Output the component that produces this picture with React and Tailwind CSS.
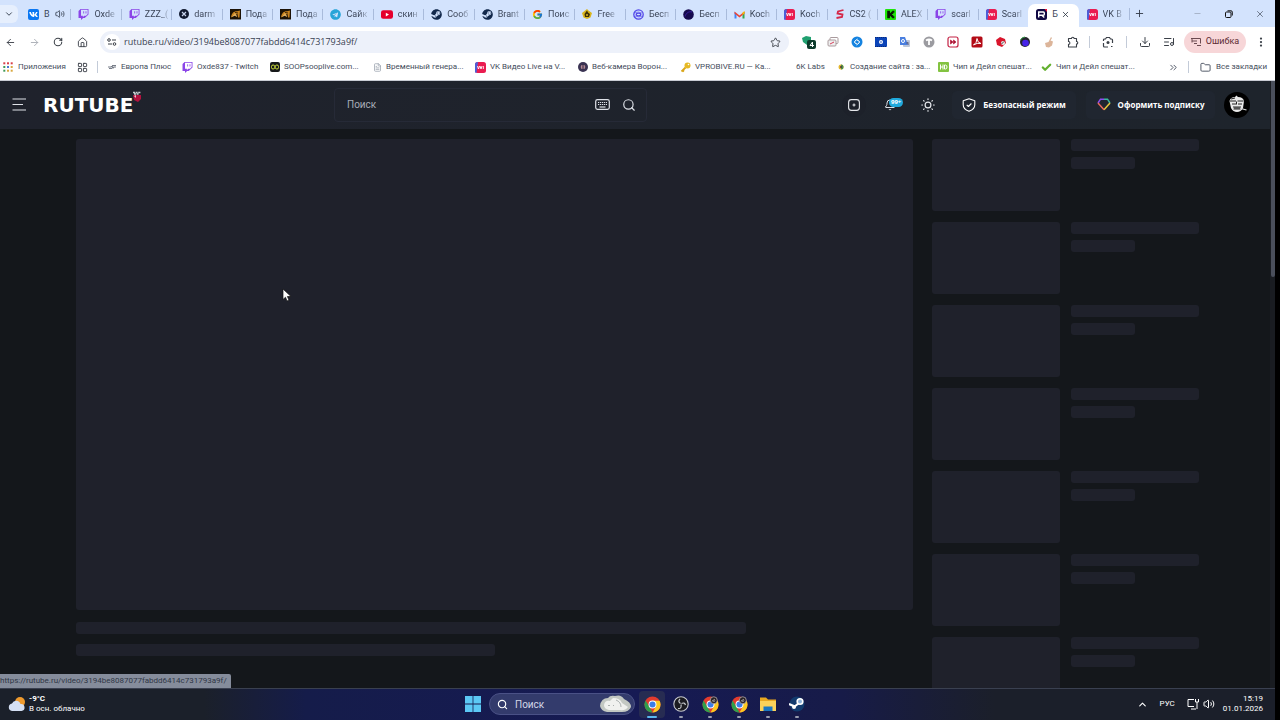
import React from 'react';
import {
  ArrowLeft, ArrowRight, RotateCw, House, Star, Download, ListMusic, EllipsisVertical, Plus, Minus, X,
  ChevronDown, ChevronUp, ChevronsRight, Folder, Volume2, Search,
  Bell, Check, LayoutGrid, FileText,
} from 'lucide-react';
import { FaTwitch, FaVk, FaTelegram, FaSteam } from 'react-icons/fa';
import { FcGoogle } from 'react-icons/fc';

const Box = ({ bg, children, r = 2 }) => (
  <svg viewBox="0 0 10 10" className="size-[10px] shrink-0" aria-hidden="true">
    <rect width="10" height="10" rx={r} fill={bg} />
    {children}
  </svg>
);

const Twitch = () => <FaTwitch className="size-[11px] shrink-0 text-[#8b45e8]" />;
const Vk = () => (
  <span className="flex size-[11px] shrink-0 items-center justify-center rounded-[2px] bg-[#0a77f2]">
    <FaVk className="size-[9px] text-white" />
  </span>
);
const DarkX = () => (
  <Box bg="#111a30" r={5}>
    <path d="M3 3l4 4M7 3L3 7" stroke="#c9d4ee" strokeWidth="1.2" />
  </Box>
);
const Hamster = () => (
  <svg viewBox="0 0 11 11" className="size-[11px] shrink-0" aria-hidden="true">
    <rect width="11" height="10.5" fill="#1c1206" />
    <path d="M1 8.5C1.500 4 4 2 7 2.200L10 1.500 9.500 8.500 8 8.500 7.500 5 5 6z" fill="#c9831f" />
    <path d="M2.500 8l2.500-3.500L6.500 8M4 6.500h2.500" stroke="#f0c070" strokeWidth=".8" fill="none" />
    <path d="M5 3.500l3 .5" stroke="#1c1206" strokeWidth=".8" />
  </svg>
);
const Telegram = () => <FaTelegram className="size-[11px] shrink-0 text-[#28a5d8]" />;
const Youtube = () => (
  <svg viewBox="0 0 12 9" className="h-[9px] w-[12px] shrink-0" aria-hidden="true">
    <rect width="12" height="8.500" y=".3" rx="2.200" fill="#e5002d" />
    <path d="M4.800 2.700v3.700L8 4.500z" fill="#fff" />
  </svg>
);
const Steam = () => <FaSteam className="size-[11px] shrink-0 text-[#12294c]" />;
const Google = () => <FcGoogle className="size-[11px] shrink-0" />;
const Free = () => (
  <svg viewBox="0 0 10 10" className="size-[10px] shrink-0" aria-hidden="true">
    <path d="M0 4l2.500-2L5 0l1.500 1.500L10 4 8.500 8.500l-3.500 1.500L1.500 8.500z" fill="#d9b51c" />
    <path d="M2.500 5L5 1.500l1 2L8 5 7 8H3z" fill="#3d2f05" />
    <circle cx="5" cy="6" r="1" fill="#d9b51c" />
  </svg>
);
const Swirl = () => (
  <svg viewBox="0 0 11 11" className="size-[11px] shrink-0" fill="none" stroke="#5348e8" strokeWidth="1.300" aria-hidden="true">
    <circle cx="5.500" cy="5.500" r="4.700" />
    <ellipse cx="5.500" cy="5.500" rx="2.300" ry="1.400" />
    <path d="M1 4q4.500-2 8 0M2 7q4 2 8 0" strokeWidth=".6" />
  </svg>
);
const Planet = () => (
  <svg viewBox="0 0 11 11" className="size-[11px] shrink-0" aria-hidden="true">
    <circle cx="5.500" cy="5.500" r="5.300" fill="#170b4e" />
    <path d="M2 7.500C3 4 6 2 9 3" stroke="#3a1fa0" fill="none" />
  </svg>
);
const Gmail = () => (
  <svg viewBox="0 0 11 9" className="h-[9px] w-[11px] shrink-0" aria-hidden="true">
    <path d="M.5 2v6.500h2V4z" fill="#4285f4" />
    <path d="M8.500 4v4.500h2V2z" fill="#34a853" />
    <path d="M.5 1.500L5.500 5.500l5-4v2L5.500 7.500.5 3.500z" fill="#ea4335" />
    <path d="M8.500 2.500L10.500 1v2.500l-2 1.500z" fill="#fbbc04" />
  </svg>
);
const Vvi = () => (
  <svg viewBox="0 0 11 11" className="size-[11px] shrink-0" aria-hidden="true">
    <rect width="11" height="11" rx="2.500" fill="#ea1c50" />
    <path d="M0 2.500A2.500 2.500 0 012.500 0H3L1.500 11A2 2 0 010 8.500z" fill="#4b5fd8" />
    <path d="M2.500 4l1 3 1-3M5 4l1 3 1-3M8.300 4v3" stroke="#fff" strokeWidth=".9" fill="none" />
  </svg>
);
const RedS = () => (
  <svg viewBox="0 0 10 10" className="size-[10px] shrink-0" fill="none" stroke="#d5284a" strokeWidth="1.800" aria-hidden="true">
    <path d="M8.500 1L3 2.500 2.500 4.500 7.500 5.500 7 8 1.500 9" />
  </svg>
);
const Kick = () => (
  <svg viewBox="0 0 10 10" className="size-[11px] shrink-0" aria-hidden="true">
    <rect width="10" height="10" rx="1" fill="#1fe50a" />
    <path d="M2 1.500h2.500v2h1v-1h1v-1h2v2h-1v1h-1v1h1v1h1v2h-2v-1h-1v-1h-1v2H2z" fill="#071a04" />
  </svg>
);
const Rutube = () => (
  <svg viewBox="0 0 11 11" className="size-[11px] shrink-0" aria-hidden="true">
    <rect width="11" height="11" rx="2.500" fill="#100943" />
    <path d="M11 0v3L8.500 0z" fill="#ed143b" />
    <path d="M2.700 8.500V3h4.600a1 1 0 011 1v1.200a1 1 0 01-1 1H3M6 6.500l2.300 2" stroke="#fff" strokeWidth="1.400" fill="none" />
  </svg>
);

const TABS = [
  ['В', Vk, 'sound'], ['Oxde', Twitch], ['ZZZ_(', Twitch], ['darm', DarkX], ['Пода', Hamster], ['Пода', Hamster],
  ['Сайк', Telegram], ['скин', Youtube], ['Сооб', Steam], ['Brant', Steam], ['Поис', Google], ['Free', Free],
  ['Бесп', Swirl], ['Бесп', Planet], ['Koch', Gmail], ['Koch', Vvi], ['CS2 (', RedS], ['ALEX', Kick],
  ['scarl', Twitch], ['Scarl', Vvi], ['Б', Rutube, 'active'], ['VK В', Vvi],
];

function Tab({ tab: [title, Icon, state], index }) {
  const active = state === 'active';
  return (
    <div className={`relative flex h-[23px] min-w-0 flex-1 items-center pb-[3px] ${active ? 'rounded-t-[7px] bg-white' : ''}`}>
      {index > 0 && index < 20 && <span className="absolute left-0 h-[11px] w-px bg-[#a9bbdb]" />}
      <button type="button" className="flex min-w-0 flex-1 items-center gap-[5px] pl-2 text-left">
        <Icon />
        <span className={`font-[Roboto] whitespace-nowrap text-[9px] leading-3 text-[#3c4659] ${active || state ? '' : '[mask-image:linear-gradient(to_right,black_60%,#0004)]'}`}>
          {title}
        </span>
        {state === 'sound' && <Volume2 className="size-[10px] shrink-0 text-[#333c4d]" />}
      </button>
      {active && (
        <button type="button" aria-label="Закрыть вкладку" className="mr-[9px]"><X className="size-[9px] text-[#1f2937]" /></button>
      )}
    </div>
  );
}

const EXT = [
  ['Антивирус', <svg viewBox="0 0 14 14" className="size-[14px]"><path d="M0 3l4-2 5 1v5L5 10 1 7z" fill="#20a070" /><rect x="5" y="5" width="9" height="9" rx="2" fill="#0c3b2b" /><path d="M10.500 12V7L8 10.500h4" stroke="#fff" fill="none" /></svg>],
  ['Окна', <svg viewBox="0 0 12 12" className="size-[12px]" fill="none" stroke="#a99a9d"><rect x="3" y="1.500" width="8" height="6" rx="1" /><rect x="1" y="4" width="8" height="6" rx="1" fill="#eee" /><path d="M3 8l4-2" stroke="#d6405a" /></svg>],
  ['Shazam', <svg viewBox="0 0 12 12" className="size-[12px]"><circle cx="6" cy="6" r="5.500" fill="#1583e0" /><path d="M6.500 3L4 5q-1 1 0 2l2 1M5.500 9L8 7q1-1 0-2L6 4" stroke="#fff" fill="none" strokeWidth="1" /></svg>],
  ['Камера', <svg viewBox="0 0 12 12" className="size-[12px]"><rect y="1" width="12" height="10" rx="1" fill="#0b44b8" /><path d="M0 1.500h12M0 10.500h12" stroke="#0a2a78" strokeDasharray="1 1" /><circle cx="6" cy="6" r="2" fill="#fff" /><circle cx="6" cy="6" r=".8" fill="#0b44b8" /></svg>],
  ['Переводчик', <svg viewBox="0 0 12 12" className="size-[12px]"><rect x="4" y="4" width="7" height="7" rx="1" fill="#bcc6d8" /><path d="M1 1h5l3 8H1z" fill="#4a7fe0" /><circle cx="4" cy="5" r="1.500" fill="none" stroke="#fff" /><path d="M7 7h3M8.500 6v1l1 2" stroke="#557" fill="none" strokeWidth=".7" /></svg>],
  ['Серый значок', <svg viewBox="0 0 12 12" className="size-[12px]"><circle cx="6" cy="6" r="5.500" fill="#9b9ba0" /><path d="M3 4.500q3-2 6 0M6 4v5" stroke="#fff" strokeWidth="1.800" fill="none" /></svg>],
  ['Перемотка', <svg viewBox="0 0 12 12" className="size-[12px]" fill="none" stroke="#c32244" strokeWidth="1.200"><rect x="1" y="1" width="10" height="10" rx="2" /><path d="M3.500 4v4L6 6zM6.500 4v4L9 6z" fill="#8c1430" strokeWidth=".8" /></svg>],
  ['Acrobat', <svg viewBox="0 0 12 12" className="size-[12px]"><rect x=".5" y=".5" width="11" height="11" rx="1.500" fill="#b30b16" /><path d="M2.500 9Q6 7 6 2.500 6.500 7 10 7.500 6 6.500 2.500 9" stroke="#fff" fill="none" /></svg>],
  ['Красный значок', <svg viewBox="0 0 12 12" className="size-[12px]"><path d="M1 4l4-3 5 2 1 4-4 4-5-2z" fill="#d9152c" /><circle cx="8" cy="7" r="2" fill="#eee" /><path d="M6.500 8L9 5.500" stroke="#444" /></svg>],
  ['Сфера', <svg viewBox="0 0 12 12" className="size-[12px]"><circle cx="6" cy="6" r="5" fill="#25252d" /><circle cx="6.500" cy="7" r="3.300" fill="#4623e8" /><path d="M1.500 4Q3 1 6 1" stroke="#2f9a42" fill="none" /></svg>],
  ['Жест', <svg viewBox="0 0 12 12" className="size-[12px]"><path d="M8 1l1 1L7.500 4.500l2.500 1-1 4-3 2L3 11l-1-4 3.500-1z" fill="#dcb59a" /></svg>],
];

const Sep = () => <span className="h-3 w-px shrink-0 bg-[#c3cbd8]" />;

const BOOKMARKS = [
  ['Европа Плюс', 'w-[75px]', <svg viewBox="0 0 10 10" className="size-[10px]"><path d="M1 5h3l1-1 1 2 1-1h2M2 6.500h3M5 3.500h4" stroke="#777d88" strokeWidth="1.200" fill="none" /></svg>],
  ['Oxde837 - Twitch', 'w-[88px]', <Twitch />],
  ['SOOPsooplive.com...', 'w-[103px]', <Box bg="#17191a"><rect x="1.500" y="3" width="3.200" height="4" rx="1.500" fill="none" stroke="#cfe03a" /><rect x="5.300" y="3" width="3.200" height="4" rx="1.500" fill="none" stroke="#cfe03a" /></Box>],
  ['Временный генера...', 'w-[102px]', <FileText className="size-[9px] text-[#98a0ac]" />],
  ['VK Видео Live на V...', 'w-[103px]', <Vvi />],
  ['Веб-камера Ворон...', 'w-[102px]', <Box bg="#3a3353" r={5}><circle cx="5" cy="5" r="2.300" fill="#b58a94" /><path d="M5 2v6" stroke="#2c2444" /></Box>],
  ['VPROBIVE.RU — Ка...', 'w-[108px]', <svg viewBox="0 0 11 11" className="size-[11px]"><path d="M5.500 5.500L1.500 9.500M2.500 8l1.500 1.500" stroke="#d9a61a" strokeWidth="1.800" /><circle cx="7.500" cy="3.500" r="3" fill="#e6b923" /><circle cx="8.500" cy="2.500" r=".8" fill="#fff" /></svg>],
  ['6K Labs', 'w-[48px]', null],
  ['Создание сайта : за...', 'w-[102px]', <svg viewBox="0 0 10 10" className="size-[10px]"><circle cx="5" cy="5" r="2.500" fill="#e3b62d" /><path d="M5 2.500a2.500 2.500 0 010 5z" fill="#4e8e4c" /><circle cx="5" cy="5" r="1" fill="#503a3a" /></svg>],
  ['Чип и Дейл спешат...', 'w-[103px]', <svg viewBox="0 0 11 10" className="h-[10px] w-[11px]"><rect width="11" height="10" rx="1" fill="#83c341" /><path d="M2.500 2.500v5M5 2.500v5M2.500 5H5M6.500 3v4h1q1.500 0 1.500-2T7.500 3z" stroke="#fff" fill="none" /></svg>],
  ['Чип и Дейл спешат...', 'w-[100px]', <Check className="size-[11px] text-[#63b02f]" strokeWidth={5} />],
];

function Browser() {
  const ib = 'flex size-6 shrink-0 items-center justify-center text-[#3b4048]';
  return (
    <div className="shrink-0 border-b border-[#c9ccd4] bg-white">
      <div className="flex h-[27px] items-end bg-[#d3e3fd]">
        <div className="flex h-[27px] w-5 shrink-0 items-center">
          <button type="button" aria-label="Поиск вкладок" className="flex h-[18px] w-[18px] items-center justify-center rounded-r-md bg-[#e6effd]">
            <ChevronDown className="size-[10px] text-[#1f2937]" />
          </button>
        </div>
        <div className="flex min-w-0 flex-1">
          {TABS.map((t, i) => <Tab key={i} tab={t} index={i} />)}
        </div>
        <div className="flex h-[27px] w-[146px] shrink-0 items-center text-[#333b49]">
          <button type="button" aria-label="Новая вкладка" className="mr-auto flex h-3 w-5 items-center justify-center border-l border-[#a9bbdb]"><Plus className="size-[11px]" /></button>
          <button type="button" aria-label="Свернуть" className="flex w-[31px] justify-center"><Minus className="size-[9px] text-[#9aa5b8]" /></button>
          <button type="button" aria-label="Развернуть" className="flex w-[31px] justify-center">
            <svg viewBox="0 0 8 8" className="size-2" fill="none" stroke="#111" ><rect x=".5" y="2" width="5.500" height="5.500" rx="1" /><path d="M2.500 .8h3.500a1.300 1.300 0 011.300 1.300v3.400" /></svg>
          </button>
          <button type="button" aria-label="Закрыть" className="flex w-[31px] justify-center"><X className="size-[10px]" strokeWidth={1.5} /></button>
        </div>
      </div>

      <div className="flex h-[30px] items-center pr-0.5">
        <div className="-ml-0.5 mr-1.5 flex">
          <button type="button" aria-label="Назад" className={ib}><ArrowLeft className="size-[11px]" /></button>
          <button type="button" aria-label="Вперёд" className={ib}><ArrowRight className="size-[11px] text-[#a9adb5]" /></button>
          <button type="button" aria-label="Обновить" className={ib}><RotateCw className="size-[10px]" strokeWidth={2.500} /></button>
          <button type="button" aria-label="Домой" className={ib}><House className="size-[11px]" /></button>
        </div>
        <div className="flex h-[22px] min-w-0 flex-1 items-center rounded-full bg-[#edf1fa] pl-1">
          <span className="flex size-4 shrink-0 items-center justify-center rounded-full bg-white">
            <svg viewBox="0 0 10 8" className="h-2 w-2.5" fill="none" stroke="#3b4048" aria-hidden="true"><circle cx="2" cy="2" r="1.300" /><path d="M5 2h4M1 6h4" /><circle cx="7.500" cy="6" r="1.300" /></svg>
          </span>
          <input aria-label="Адресная строка" defaultValue="rutube.ru/video/3194be8087077fabdd6414c731793a9f/" className="ml-1 min-w-0 flex-1 bg-transparent text-[9px] text-[#394252] outline-none" />
          <button type="button" aria-label="Добавить в закладки" className="px-2"><Star className="size-[11px] text-[#3b4048]" /></button>
        </div>
        <div className="ml-2 flex shrink-0">
          {EXT.map(([name, icon]) => <button key={name} type="button" aria-label={name} className={ib}>{icon}</button>)}
          <button type="button" aria-label="Расширения" className={ib}>
            <svg viewBox="0 0 12 12" className="size-3" fill="none" stroke="#3b4048" strokeWidth="1.100" strokeLinejoin="round" aria-hidden="true"><path d="M1.500 2.500h3a1.300 1.300 0 012.600 0h2.400v3a1.300 1.300 0 010 2.600v2.900h-8V8.300a1.400 1.400 0 000-2.800z" /></svg>
          </button>
        </div>
        <div className="flex shrink-0 items-center pl-1">
          <Sep />
          <button type="button" aria-label="Объектив" className="flex w-9 justify-center">
            <svg viewBox="0 0 12 12" className="size-3" fill="none" stroke="#3b4048" strokeWidth="1.200" aria-hidden="true"><path d="M1.500 7v3a1 1 0 001 1H6M1.500 5V4a1 1 0 011-1h1l1-1.500h3L8.500 3h1a1 1 0 011 1v3" /><circle cx="6" cy="6.500" r="1.500" fill="#3b4048" stroke="none" /><path d="M9 10.500h1.500" /></svg>
          </button>
          <Sep />
          <div className="w-1.5" />
          <button type="button" aria-label="Загрузки" className={ib}><Download className="size-[12px]" /></button>
          <button type="button" aria-label="Медиа" className={ib}><ListMusic className="size-[12px]" /></button>
          <button type="button" className="ml-[3px] mr-[3px] flex h-[22px] w-[62px] items-center justify-center gap-[5px] rounded-full bg-[#f7d6d8] font-[Roboto] text-[9px] text-[#5c2a33]">
            <svg viewBox="0 0 10 10" className="size-[10px]" fill="none" stroke="#6b4a50" aria-hidden="true"><path d="M0 1.500h9.500v5M1 4h5M3 6.500h3M6 8.500h4M1 1.500v4" /></svg>
            Ошибка
          </button>
          <button type="button" aria-label="Меню" className={ib}><EllipsisVertical className="size-[12px]" strokeWidth={2.500} /></button>
        </div>
      </div>

      <nav className="flex h-[23px] items-center pb-[3px] pl-[3px] font-[Roboto] text-[8px] text-[#454d5c]" aria-label="Закладки">
        <a href="#apps" className="flex w-[74px] shrink-0 items-center gap-[5px] whitespace-nowrap">
          <svg viewBox="0 0 10 10" className="size-[10px]" aria-hidden="true">
            {['#d9404a', '#d9404a', '#d9404a', '#3f9a58', '#4a77d4', '#d9a840', '#3f9a58', '#d9a840', '#d9a840'].map((c, i) => (
              <rect key={i} x={(i % 3) * 3.700 + 0.3} y={Math.floor(i / 3) * 3.700 + 0.3} width="2" height="2" fill={c} />
            ))}
          </svg>
          Приложения
        </a>
        <button type="button" aria-label="Группы вкладок" className="mr-[9px] shrink-0"><LayoutGrid className="size-[11px] text-[#3b4048]" /></button>
        <Sep />
        <div className="ml-[9px] flex min-w-0 flex-1 overflow-hidden">
          {BOOKMARKS.map(([name, w, icon], i) => (
            <a key={i} href="#bookmark" className={`flex shrink-0 items-center gap-1 whitespace-nowrap ${w}`}>
              {icon || <span className="w-1" />}
              {name}
            </a>
          ))}
        </div>
        <button type="button" aria-label="Ещё закладки" className="mr-[9px]"><ChevronsRight className="size-[11px]" /></button>
        <Sep />
        <a href="#all" className="ml-[11px] mr-2 flex shrink-0 items-center gap-[5px] whitespace-nowrap"><Folder className="size-[11px]" />Все закладки</a>
      </nav>
    </div>
  );
}

function SiteHeader() {
  return (
    <header className="flex h-12 shrink-0 items-center bg-linear-to-r from-[#1f222c] to-[#1e242c] pb-px pl-3 pr-5 text-[#dfe2e8]">
      <button type="button" aria-label="Меню сайта" className="shrink-0">
        <svg viewBox="0 0 15 13" className="h-[13px] w-[15px]" stroke="#dfe2e8" strokeWidth="1.200"><path d="M.5 1h13.500M.5 6.500h10.500M.5 12h13.500" /></svg>
      </button>
      <a href="#home" className="relative ml-4 shrink-0 font-['DejaVu_Sans',sans-serif] text-[20px] leading-6 font-bold text-white">
        RUTUBE
        <svg viewBox="0 0 10 12" className="absolute -right-[9px] -top-0.5 h-3 w-2.5" aria-hidden="true">
          <path d="M1 1.500h8M2 3h5" stroke="#c7cdd0" strokeWidth="1.400" strokeDasharray="2 .6" />
          <path d="M1 4h8v4l-3 3-4-2z" fill="#b3123f" /><path d="M2 5l2-1v3z" fill="#f3c3cd" />
        </svg>
      </a>
      <div className="min-w-0 flex-1" />
      <form className="mr-[195px] flex h-[34px] w-[313px] shrink items-center rounded-[4px] border border-[#262a37] pl-3 pr-[10px]" onSubmit={(e) => e.preventDefault()}>
        <input aria-label="Поиск" placeholder="Поиск" className="min-w-0 flex-1 bg-transparent font-[Roboto] text-[10px] text-white outline-none placeholder:text-[#a8adb8]" />
        <button type="button" aria-label="Клавиатура">
          <svg viewBox="0 0 15 11" className="h-[11px] w-[15px]" fill="none" stroke="#dfe2e8" strokeWidth="1.200" aria-hidden="true"><rect x=".7" y=".7" width="13.600" height="9.600" rx="1.800" /><path d="M3 3.500h9M3 5.500h9" strokeDasharray="1.200 .75" /><path d="M4.500 8h6" /></svg>
        </button>
        <button type="submit" aria-label="Найти" className="ml-3"><Search className="size-[14px]" strokeWidth={2} /></button>
      </form>
      <div className="flex shrink-0 items-center">
        <button type="button" aria-label="Добавить" className="flex size-6 items-center justify-center rounded-full bg-[#1d212a]">
          <svg viewBox="0 0 12 12" className="size-3" fill="none" stroke="#e6e8ec" strokeWidth="1.100" aria-hidden="true"><rect x=".6" y=".6" width="10.800" height="10.800" rx="2.800" /><path d="M6 4.500v3M4.500 6h3" /></svg>
        </button>
        <button type="button" aria-label="Уведомления" className="relative ml-3 flex size-6 items-center justify-center">
          <Bell className="size-[12px]" />
          <span className="absolute left-[11px] top-[5px] h-[9px] rounded-full bg-[#1fa9dc] px-0.5 text-[6px] leading-[9px] font-bold text-white">99+</span>
        </button>
        <button type="button" aria-label="Тема" className="ml-[14px] flex size-6 items-center justify-center">
          <svg viewBox="0 0 14 14" className="size-[14px]" fill="none" stroke="#e6e8ec" strokeWidth="1.200" strokeLinecap="round" aria-hidden="true"><circle cx="7" cy="7" r="2.900" /><path d="M7 .8v.7M7 12.500v.7M.8 7h.7M12.500 7h.7M2.600 2.600l.5.5M10.900 10.900l.5.5M2.600 11.400l.5-.5M10.900 3.100l.5-.5" /></svg>
        </button>
        <button type="button" className="ml-3 flex h-7 w-[124px] items-center justify-center gap-[7px] rounded-[5px] bg-[#202630] text-[8px] font-bold whitespace-nowrap text-white">
          <svg viewBox="0 0 14 14" className="size-[14px]" fill="none" stroke="#fff" strokeWidth="1.100" strokeLinejoin="round" aria-hidden="true"><path d="M7 .8l5.800 2v4q0 4.500-5.800 6.500Q1.200 11.300 1.200 6.800v-4z" /><path d="M4.700 6.800l1.700 1.700 3-3" /></svg>
          Безопасный режим
        </button>
        <button type="button" className="ml-[10px] flex h-7 w-[129px] items-center justify-center gap-[7px] rounded-[5px] bg-[#202630] text-[8px] font-bold whitespace-nowrap text-white">
          <svg viewBox="0 0 14 13" className="h-[13px] w-[14px]" fill="none" strokeWidth="1.500" aria-hidden="true">
            <path d="M1 5L3.500 1.200h3.500" stroke="#8d4df0" /><path d="M7 1.200h3.500L13 5" stroke="#3bb7a0" />
            <path d="M13 5L7 11.800" stroke="#e7c93c" /><path d="M7 11.800L1 5" stroke="#ed6a5e" />
          </svg>
          Оформить подписку
        </button>
        <button type="button" aria-label="Профиль" className="ml-[9px]">
          <svg viewBox="0 0 26 26" className="size-[26px]" aria-hidden="true">
            <circle cx="13" cy="13" r="13" fill="#000" />
            <path d="M5.500 9q1-4 5.500-4l1.500-1.500L14 5q5 0 6 4l-1 7q-2 4-6 4t-6-4z" fill="#e9e9e9" />
            <path d="M6 9h6M13.500 9h6M8 12h4M14 12h4M9 15h8M9.500 17h7M12.500 9.500v3M7 7l4-1M11 15v2M13 15v2M15 15v2" stroke="#222" strokeWidth="1" fill="none" />
            <path d="M17 16.500l5.500 1.500" stroke="#ddd" strokeWidth="1.200" />
          </svg>
        </button>
      </div>
    </header>
  );
}

const Bone = ({ className }) => <div className={`rounded-[3px] bg-[#1f212b] ${className}`} />;

function Site() {
  return (
    <div className="relative flex min-h-0 flex-1 overflow-hidden bg-[#14171b]">
      <div className="flex min-w-0 flex-1 flex-col">
        <SiteHeader />
        <main className="flex min-h-0 flex-1 gap-[19px] overflow-hidden pl-[76px] pr-[71px] pt-[10px]">
          <div className="min-w-0 flex-1">
            <Bone className="aspect-video w-full" />
            <Bone className="mt-3 h-3 w-4/5" />
            <Bone className="mt-[10px] h-3 w-1/2" />
          </div>
          <div className="flex shrink-0 flex-col gap-[11px]">
            {[0, 1, 2, 3, 4, 5, 6].map((i) => (
              <div key={i} className="flex shrink-0 gap-[11px]">
                <Bone className="h-18 w-32" />
                <div className="w-32 space-y-[6px]">
                  <Bone className="h-3 w-full" />
                  <Bone className="h-3 w-1/2" />
                </div>
              </div>
            ))}
          </div>
        </main>
      </div>
      <div className="w-[5px] shrink-0 bg-[#191c21]"><div className="ml-px h-[196px] rounded-b-sm bg-[#4a4f5b]" /></div>
      <div className="absolute bottom-0 left-0 h-[14px] rounded-tr-[2px] bg-[#858c9b] pr-1 font-[Roboto] text-[8px] leading-[14px] text-[#303746]">
        https://rutube.ru/video/3194be8087077fabdd6414c731793a9f/
      </div>
      <svg viewBox="0 0 10 14" className="absolute left-[282px] top-[207px] h-[14px] w-[10px]" aria-hidden="true">
        <path d="M1 1v10.500l2.500-2.300L5 13l2-.8-1.600-3.700H9z" fill="#fff" stroke="#111" strokeWidth=".7" />
      </svg>
    </div>
  );
}

const Chrome = ({ badge }) => (
  <svg viewBox="0 0 18 18" className="size-[17px]" aria-hidden="true">
    <circle cx="9" cy="9" r="8.500" fill="#e33b2e" />
    <path d="M1.640 4.750L5.500 11 9 17.500A8.500 8.500 0 011.640 4.750z" fill="#2fa04c" />
    <path d="M9 17.500l3.700-6.300L9 5h7.500A8.500 8.500 0 019 17.500z" fill="#fbc921" />
    <circle cx="9" cy="9" r="4.200" fill="#fff" /><circle cx="9" cy="9" r="3.200" fill="#3b7de8" />
    {badge && <g><circle cx="12.500" cy="4.500" r="3.700" fill="#2a2226" stroke="#b7b0b2" strokeWidth=".8" /><path d="M10.500 5.500l3-2M12 6l2-1" stroke="#ddd" strokeWidth=".8" /></g>}
  </svg>
);

const APPS = [
  ['Chrome', <Chrome />],
  ['OBS', <svg viewBox="0 0 16 16" className="size-4"><circle cx="8" cy="8" r="7.200" fill="#1b1b20" stroke="#c7c9ce" strokeWidth="1.100" /><path d="M7 3q-2.500 2.500.5 4.500M12.500 9q-1-3-4-1.500M5 12.500q4 .5 3-4" stroke="#c7c9ce" strokeWidth="1.200" fill="none" /></svg>],
  ['Chrome, профиль 2', <Chrome badge />],
  ['Chrome, профиль 3', <Chrome badge />],
  ['Проводник', <svg viewBox="0 0 18 16" className="h-4 w-[18px]"><path d="M1 1.500h6l2 2h8V15H1z" fill="#e9a820" /><path d="M1 5h16v10H1z" fill="#fbd25a" /><path d="M4.500 15v-4.500h9V15z" fill="#1b78c2" /></svg>],
  ['Steam', <svg viewBox="0 0 16 16" className="size-4"><circle cx="8" cy="8" r="7.500" fill="#123b6e" /><path d="M0 8l6 2.500M5 11l5-4" stroke="#fff" strokeWidth="2.200" /><circle cx="11" cy="5.500" r="2.800" fill="#8fb4dc" stroke="#fff" strokeWidth="1.600" /><circle cx="5" cy="11" r="2" fill="#fff" /></svg>],
];

function Taskbar() {
  return (
    <footer className="grid h-8 shrink-0 grid-cols-[1fr_auto_1fr] items-center border-t border-[#3a4050] bg-[linear-gradient(to_right,#1b202a_16%,#151c4a_24%,#161a54_50%,#171b48_66%,#1b1f2a_78%)] pb-px text-white">
      <button type="button" className="flex items-center gap-[3px] justify-self-start pl-2 text-left font-[Roboto] text-[8px] leading-[10px]">
        <svg viewBox="0 0 18 16" className="h-4 w-[18px]" aria-hidden="true"><circle cx="12" cy="6" r="5" fill="#ee9a2e" /><path d="M4 15a3.800 3.800 0 010-7.500A4.500 4.500 0 0112.500 8 3.500 3.500 0 0113.500 15z" fill="#d5e0f4" /></svg>
        <span><span className="block font-bold">-9°C</span><span className="block">В осн. облачно</span></span>
      </button>
      <div className="flex items-center">
        <button type="button" aria-label="Пуск" className="mr-2">
          <svg viewBox="0 0 16 16" className="size-4" fill="#5cc8f5"><path d="M0 0h7.600v7.600H0zM8.400 0H16v7.600H8.400zM0 8.400h7.600V16H0zM8.400 8.400H16V16H8.400z" /></svg>
        </button>
        <label className="flex h-[22px] w-[146px] items-center gap-[7px] rounded-full border border-[#4a5186] bg-[#333b6c] pl-[7px] pr-0.5">
          <Search className="size-[11px] shrink-0" strokeWidth={2.5} />
          <input aria-label="Поиск в Windows" placeholder="Поиск" className="w-10 min-w-0 flex-1 bg-transparent font-[Roboto] text-[10px] outline-none placeholder:text-[#d3d7e8]" />
          <svg viewBox="0 0 33 18" className="h-[18px] w-[33px] shrink-0" aria-hidden="true">
            <path d="M1 11Q2 3 9 3q2-3 7-2 6-2 9 3 7 3 7 8-2 5-9 5H8q-6-1-7-6z" fill="#c3c8c3" />
            <path d="M5 10q1-5 6-4l3-3q7 0 9 5l6 4q-3 4-8 3H10q-5-1-5-5z" fill="#f0f1ef" />
            <path d="M9 10l1 1 1-1M14 10l1 1M17 5q5 2 5 7" stroke="#8d9393" fill="none" strokeWidth=".7" />
          </svg>
        </label>
        <div className="ml-1 flex gap-[3px]">
          {APPS.map(([name, icon], i) => (
            <button key={name} type="button" aria-label={name} className={`relative flex h-[27px] w-[26px] items-center justify-center rounded-[4px] ${i === 0 ? 'bg-[#272c52]' : ''}`}>
              {icon}
              <span className={`absolute bottom-0 h-0.5 rounded-full ${i === 0 ? 'w-[10px] bg-[#5bb8f0]' : 'w-1 bg-[#9a9eb0]'}`} />
            </button>
          ))}
        </div>
      </div>
      <div className="flex items-center justify-self-end pr-3 font-[Roboto] text-[8px]">
        <button type="button" aria-label="Скрытые значки" className="mr-3"><ChevronUp className="size-[11px]" strokeWidth={2.5} /></button>
        <span className="mr-3">РУС</span>
        <button type="button" aria-label="Сеть и звук" className="mr-2 flex gap-1">
          <svg viewBox="0 0 12 12" className="size-3" fill="none" stroke="#fff" aria-hidden="true"><path d="M7 1.500H1v7h6M4 11h5M8.500 1v3h3V1M10 4v7" /></svg>
          <Volume2 className="size-3" />
        </button>
        <span className="text-right leading-[10px]"><span className="block">15:19</span><span className="block">01.01.2026</span></span>
      </div>
    </footer>
  );
}

export default function App() {
  return (
    <div className="flex h-screen flex-col bg-black pr-[5px] font-['Open_Sans','Noto_Sans',sans-serif]">
      <Browser />
      <Site />
      <Taskbar />
    </div>
  );
}
